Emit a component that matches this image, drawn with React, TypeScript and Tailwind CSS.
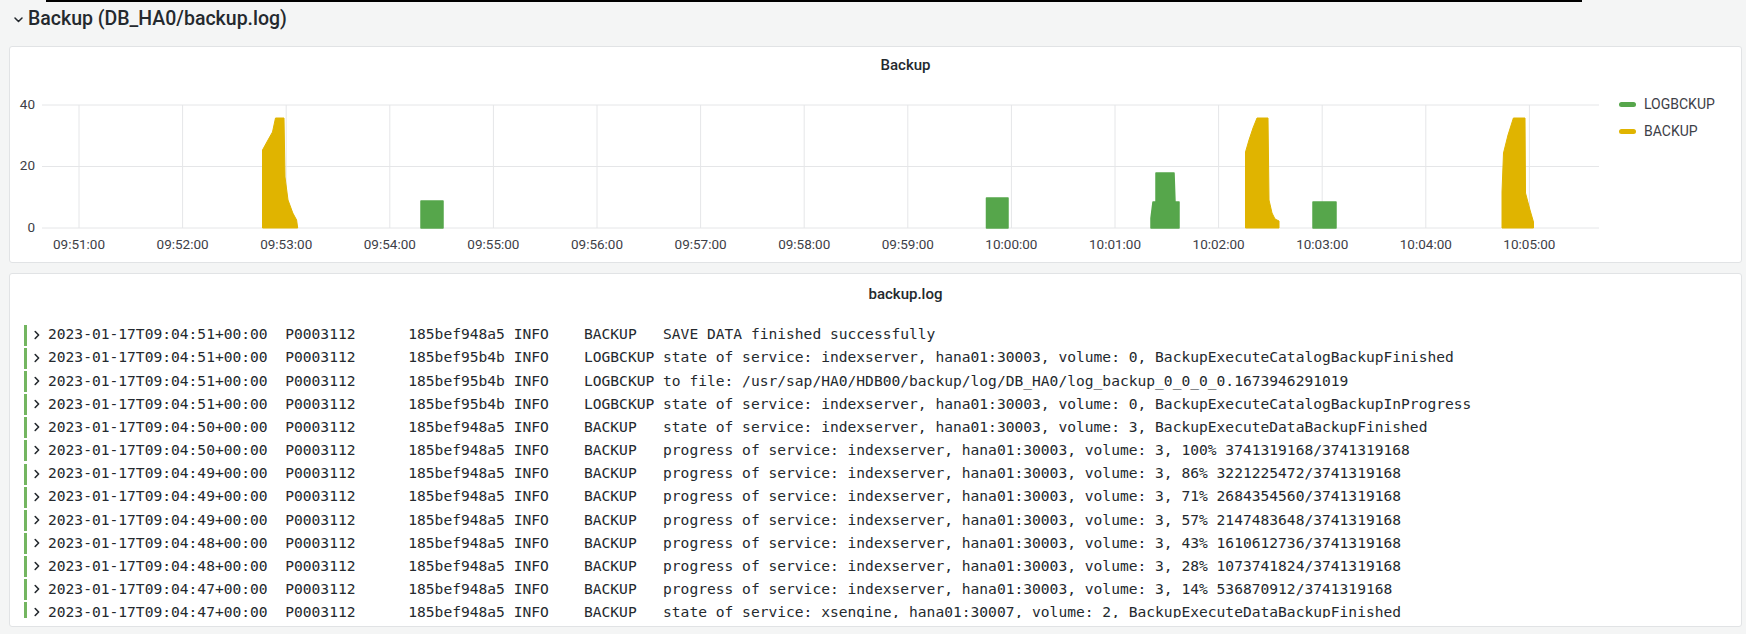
import React from 'react';

const ticks = [
  '09:51:00', '09:52:00', '09:53:00', '09:54:00', '09:55:00', '09:56:00', '09:57:00', '09:58:00',
  '09:59:00', '10:00:00', '10:01:00', '10:02:00', '10:03:00', '10:04:00', '10:05:00',
];

// x of the first minute tick and pixels per minute
const X0 = 79;
const STEP = 103.6;

const GREEN = '#56a64b';
const YELLOW = '#e0b400';

// shapes in page coordinates (svg viewBox starts at the panel's inner corner)
const yellowShapes = [
  '262.5,228 262.5,150 268,140 272.5,132 275.5,118 284,118 285,177 288,200 292.8,213 296.6,220 297.7,228',
  '1245.5,228 1245.5,152 1249,140 1253,128 1257,118 1268,118 1269,200 1272,213 1275,219 1279,221 1279,228',
  '1502,228 1502,192 1503.5,153 1508,135 1513.4,118 1525,118 1525.5,193 1530,210 1533.5,222 1533.5,228',
];

const greenShapes = [
  '421,228 421,201 443,201 443,228',
  '986.5,228 986.5,198 1008,198 1008,228',
  '1151,228 1151,218 1153,202 1156,202 1156,173 1174,173 1175,202 1179,202 1179,228',
  '1313,228 1313,202 1336,202 1336,228',
];

const pad = (s: string, n: number) => s + ' '.repeat(Math.max(1, n - s.length));

const logRows = [
  ['2023-01-17T09:04:51+00:00', '185bef948a5', 'BACKUP', 'SAVE DATA finished successfully'],
  ['2023-01-17T09:04:51+00:00', '185bef95b4b', 'LOGBCKUP', 'state of service: indexserver, hana01:30003, volume: 0, BackupExecuteCatalogBackupFinished'],
  ['2023-01-17T09:04:51+00:00', '185bef95b4b', 'LOGBCKUP', 'to file: /usr/sap/HA0/HDB00/backup/log/DB_HA0/log_backup_0_0_0_0.1673946291019'],
  ['2023-01-17T09:04:51+00:00', '185bef95b4b', 'LOGBCKUP', 'state of service: indexserver, hana01:30003, volume: 0, BackupExecuteCatalogBackupInProgress'],
  ['2023-01-17T09:04:50+00:00', '185bef948a5', 'BACKUP', 'state of service: indexserver, hana01:30003, volume: 3, BackupExecuteDataBackupFinished'],
  ['2023-01-17T09:04:50+00:00', '185bef948a5', 'BACKUP', 'progress of service: indexserver, hana01:30003, volume: 3, 100% 3741319168/3741319168'],
  ['2023-01-17T09:04:49+00:00', '185bef948a5', 'BACKUP', 'progress of service: indexserver, hana01:30003, volume: 3, 86% 3221225472/3741319168'],
  ['2023-01-17T09:04:49+00:00', '185bef948a5', 'BACKUP', 'progress of service: indexserver, hana01:30003, volume: 3, 71% 2684354560/3741319168'],
  ['2023-01-17T09:04:49+00:00', '185bef948a5', 'BACKUP', 'progress of service: indexserver, hana01:30003, volume: 3, 57% 2147483648/3741319168'],
  ['2023-01-17T09:04:48+00:00', '185bef948a5', 'BACKUP', 'progress of service: indexserver, hana01:30003, volume: 3, 43% 1610612736/3741319168'],
  ['2023-01-17T09:04:48+00:00', '185bef948a5', 'BACKUP', 'progress of service: indexserver, hana01:30003, volume: 3, 28% 1073741824/3741319168'],
  ['2023-01-17T09:04:47+00:00', '185bef948a5', 'BACKUP', 'progress of service: indexserver, hana01:30003, volume: 3, 14% 536870912/3741319168'],
  ['2023-01-17T09:04:47+00:00', '185bef948a5', 'BACKUP', 'state of service: xsengine, hana01:30007, volume: 2, BackupExecuteDataBackupFinished'],
];

function Chart() {
  return (
    <svg width={1595} height={179} viewBox="10 83 1595 179" className="block shrink-0">
      {/* horizontal grid */}
      {[105, 166.5, 228].map((y) => (
        <line key={y} x1={42} x2={1599} y1={y} y2={y} stroke="#e5e6e8" strokeWidth={1} />
      ))}
      {/* vertical grid */}
      {ticks.map((t, i) => (
        <line key={t} x1={X0 + i * STEP} x2={X0 + i * STEP} y1={105} y2={228} stroke="#e5e6e8" strokeWidth={1} />
      ))}
      {['40', '20', '0'].map((v, i) => (
        <text
          key={v}
          x={35}
          y={[105, 166.5, 228][i]}
          textAnchor="end"
          dominantBaseline="middle"
          fill="#3d4047"
          fontSize={13.5}
          fontFamily="Roboto, sans-serif"
        >
          {v}
        </text>
      ))}
      {ticks.map((t, i) => (
        <text
          key={t}
          x={X0 + i * STEP}
          y={245}
          textAnchor="middle"
          dominantBaseline="middle"
          fill="#3d4047"
          fontSize={13.5}
          fontFamily="Roboto, sans-serif"
        >
          {t}
        </text>
      ))}
      {yellowShapes.map((p) => (
        <polygon key={p} points={p} fill={YELLOW} stroke={YELLOW} strokeWidth={1} strokeLinejoin="round" />
      ))}
      {greenShapes.map((p) => (
        <polygon key={p} points={p} fill={GREEN} stroke={GREEN} strokeWidth={1.5} strokeLinejoin="round" />
      ))}
    </svg>
  );
}

export default function App() {
  return (
    <div className="w-[1746px] h-[634px] bg-[#f4f5f5] overflow-hidden font-['Roboto',sans-serif] text-[#24292e]">
      <div className="ml-[46px] w-[1536px] h-[2px] bg-black" />

      {/* row header */}
      <div className="h-[34px] flex items-center pl-[14px]">
        <svg width="9" height="6" viewBox="0 0 9 6" className="mr-[5px] mt-[1px]">
          <path d="M1 1l3.5 3.5L8 1" fill="none" stroke="#24292e" strokeWidth="1.5" strokeLinecap="round" strokeLinejoin="round" />
        </svg>
        <span className="text-[19.5px] font-medium leading-none">Backup (DB_HA0/backup.log)</span>
      </div>

      {/* Backup chart panel */}
      <div className="mt-[10px] ml-[9px] w-[1733px] h-[217px] bg-white border border-[#e1e3e5] rounded-[3px] flex flex-col">
        <div className="h-[36px] flex items-center justify-center pl-[60px] text-[15px] font-medium">Backup</div>
        <div className="flex">
          <Chart />
          <div className="pl-[14px] pt-[8px] flex flex-col text-[14px] text-[#3d4047]">
            <div className="h-[27px] flex items-center gap-[8px]">
              <span className="w-[17px] h-[5px] rounded-full bg-[#56a64b]" />
              LOGBCKUP
            </div>
            <div className="h-[27px] flex items-center gap-[8px]">
              <span className="w-[17px] h-[5px] rounded-full bg-[#e0b400]" />
              BACKUP
            </div>
          </div>
        </div>
      </div>

      {/* backup.log panel */}
      <div className="mt-[10px] ml-[9px] w-[1733px] h-[354px] bg-white border border-[#e1e3e5] rounded-[3px] flex flex-col">
        <div className="h-[40px] shrink-0 flex items-center justify-center pl-[60px] text-[15px] font-medium">backup.log</div>
        <div className="mt-[9px] h-[295px] overflow-hidden pl-[14px]">
          {logRows.map(([ts, id, kind, msg], i) => (
            <div key={i} className="h-[23.17px] flex items-center">
              <div className="w-[3px] h-[21px] mt-[1px] bg-[#73b560]" />
              <svg width="6" height="10" viewBox="0 0 6 10" className="ml-[7px] mr-[8px] shrink-0">
                <path d="M1.2 1.5L4.6 5L1.2 8.5" fill="none" stroke="#24292e" strokeWidth="1.6" strokeLinecap="round" strokeLinejoin="round" />
              </svg>
              <span className="whitespace-pre font-['DejaVu_Sans_Mono',monospace] text-[14.6px] leading-none text-[#24292e]">
                {pad(ts, 27) + pad('P0003112', 14) + id + ' ' + pad('INFO', 8) + pad(kind, 9) + msg}
              </span>
            </div>
          ))}
        </div>
      </div>
    </div>
  );
}
